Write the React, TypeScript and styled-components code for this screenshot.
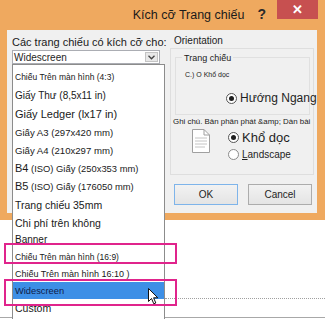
import React from 'react';
import styled, { createGlobalStyle } from 'styled-components';

const Global = createGlobalStyle`
  html, body { margin: 0; padding: 0; background: #fff; }
  body { font-family: "Liberation Sans", Arial, sans-serif; color: #1e1e1e; }
  * { box-sizing: border-box; }
`;

const Stage = styled.div`
  position: relative;
  width: 325px;
  height: 319px;
  overflow: hidden;
  background: #fff;
  display: flex;
  flex-direction: column;
`;

const Dialog = styled.div`
  width: 325px;
  height: 220px;
  flex: none;
  background: #efa95f;
  display: flex;
  flex-direction: column;
  padding: 0 8px 7px 7px;
`;

const TitleBar = styled.div`
  height: 30px;
  flex: none;
  margin: 0 -8px 0 -7px;
  display: flex;
  justify-content: flex-end;
  align-items: flex-start;
`;

const Title = styled.div`
  font-size: 12.5px;
  line-height: 30px;
  color: #1a1a1a;
`;

const Help = styled.div`
  margin-left: 13px;
  font-size: 14px;
  font-weight: bold;
  line-height: 28px;
  color: #2a2a2a;
`;

const CloseButton = styled.div`
  margin-left: 11px;
  margin-right: 7px;
  width: 41px;
  height: 19px;
  background: #c75050;
  color: #fff;
  font-size: 13px;
  font-weight: bold;
  display: flex;
  align-items: center;
  justify-content: center;
`;

const Body = styled.div`
  flex: 1;
  background: #f0f0f0;
  display: flex;
  padding: 5px 3px 0 5px;
`;

const LeftCol = styled.div`
  width: 148px;
  display: flex;
  flex-direction: column;
`;

const Label = styled.div`
  font-size: 11px;
  line-height: 14px;
  white-space: nowrap;
  color: #1a1a1a;
`;

const Select = styled.div`
  margin-top: 1px;
  height: 14px;
  width: 148px;
  background: #fff;
  border: 1px solid #abadb3;
  display: flex;
  align-items: center;
  font-size: 10px;
  padding-left: 1px;
`;

const SelectText = styled.span`
  flex: 1;
`;

const SelectArrow = styled.div`
  width: 13px;
  height: 10px;
  margin-right: 1px;
  background: #e8e8e8;
  border: 1px solid #c4c4c4;
  display: flex;
  align-items: center;
  justify-content: center;
`;

const RightCol = styled.div`
  margin-left: 10px;
  width: 144px;
  display: flex;
  flex-direction: column;
`;

const SmallLabel = styled.div`
  font-size: 10px;
  line-height: 12px;
  padding-left: 4px;
  color: #222;
`;

const Group = styled.div`
  margin-top: 1px;
  height: 127px;
  border: 1px solid #dedede;
  display: flex;
  flex-direction: column;
`;

const SubGroup = styled.div`
  margin: 8px 3px 0 4px;
  height: 58px;
  border: 1px solid #e0e0e0;
  display: flex;
  flex-direction: column;
  padding-left: 6px;
`;

const Legend = styled.div`
  align-self: flex-start;
  margin-top: -5px;
  padding: 0 2px;
  background: #f0f0f0;
  font-size: 9px;
  line-height: 10px;
  color: #222;
`;

const Tiny = styled.div<{ $size: number; $top: number; $left: number }>`
  font-size: ${(p) => p.$size}px;
  line-height: 9px;
  margin-top: ${(p) => p.$top}px;
  margin-left: ${(p) => p.$left}px;
  white-space: nowrap;
  color: #222;
`;

const RadioRow = styled.div<{ $h: number; $top: number; $left?: number }>`
  height: ${(p) => p.$h}px;
  margin-top: ${(p) => p.$top}px;
  margin-left: ${(p) => p.$left ?? 0}px;
  display: flex;
  align-items: center;
  gap: 3px;
  white-space: nowrap;
`;

const Radio = styled.span<{ $on?: boolean }>`
  width: 11px;
  height: 11px;
  flex: none;
  border-radius: 50%;
  border: 1px solid ${(p) => (p.$on ? '#555' : '#8a8a8a')};
  background: #fff;
  display: flex;
  align-items: center;
  justify-content: center;
  &::after {
    content: '';
    width: 5px;
    height: 5px;
    border-radius: 50%;
    background: ${(p) => (p.$on ? '#1e1e1e' : 'transparent')};
  }
`;

const RadioText = styled.span<{ $size: number }>`
  font-size: ${(p) => p.$size}px;
  color: #1e1e1e;
  u { text-decoration: underline; }
`;

const NotesRow = styled.div`
  margin-top: 3px;
  display: flex;
  align-items: flex-start;
`;

const DocIcon = styled.svg`
  margin-left: 21px;
  flex: none;
`;

const RadioCol = styled.div`
  margin-left: 18px;
  display: flex;
  flex-direction: column;
`;

const Buttons = styled.div`
  margin-top: 9px;
  padding-left: 4px;
  display: flex;
  gap: 10px;
`;

const Button = styled.div<{ $default?: boolean }>`
  width: 64px;
  height: 21px;
  border: 1px solid ${(p) => (p.$default ? '#7eb4ea' : '#acacac')};
  background: linear-gradient(#f2f2f2, #e4e4e4);
  display: flex;
  align-items: center;
  justify-content: center;
  font-size: 10px;
  color: #1e1e1e;
`;

const Backdrop = styled.div`
  flex: 1;
  display: flex;
  flex-direction: column;
  padding-top: 78px;
`;

const DottedLine = styled.div`
  margin-left: 165px;
  border-top: 1px dotted #a0a0a0;
`;

const BottomLine = styled.div`
  margin-top: 18px;
  border-top: 1px solid #a8a8a8;
`;

const List = styled.div`
  position: absolute;
  left: 12px;
  top: 64px;
  width: 153px;
  height: 270px;
  background: #fff;
  border: 1px solid #8c8c8c;
  padding-top: 3px;
  display: flex;
  flex-direction: column;
`;

const Item = styled.div<{ $size: number; $h: number; $selected?: boolean }>`
  height: ${(p) => p.$h}px;
  flex: none;
  display: flex;
  align-items: center;
  padding-left: 2px;
  font-size: ${(p) => p.$size}px;
  white-space: pre;
  background: ${(p) => (p.$selected ? '#3d8fe6' : 'transparent')};
  color: ${(p) => (p.$selected ? '#10204a' : '#1a1a1a')};
`;

const Big = styled.span`
  font-size: 11px;
`;

const Highlight = styled.div<{ $top: number; $h: number }>`
  position: absolute;
  left: 4px;
  top: ${(p) => p.$top}px;
  width: 173px;
  height: ${(p) => p.$h}px;
  border: 2px solid #e0248c;
`;

const Cursor = styled.svg`
  position: absolute;
  left: 148px;
  top: 288px;
`;

type Entry = { text: string; size: number; h: number; prefix?: string; selected?: boolean };

const entries: Entry[] = [
  { text: 'Chiếu Trên màn hình (4:3)', size: 8.5, h: 18 },
  { text: 'Giấy Thư (8,5x11 in)', size: 10, h: 18 },
  { text: 'Giấy Ledger (lx17 in)', size: 11, h: 19 },
  { text: 'Giấy A3 (297x420 mm)', size: 9.6, h: 18 },
  { text: 'Giấy A4 (210x297 mm)', size: 9.6, h: 18 },
  { prefix: 'B4', text: ' (ISO) Giấy (250x353 mm)', size: 9.4, h: 18 },
  { prefix: 'B5', text: ' (ISO) Giấy (176050 mm)', size: 9.4, h: 18 },
  { text: 'Trang chiếu 35mm', size: 10.5, h: 19 },
  { text: 'Chi phí trên không', size: 10.5, h: 17 },
  { text: 'Banner', size: 10, h: 17 },
  { text: 'Chiếu Trên màn hình (16:9)', size: 8.5, h: 17 },
  { text: 'Chiếu Trên màn hình 16:10 )', size: 9, h: 17 },
  { text: 'Widescreen', size: 9.3, h: 17, selected: true },
  { text: 'Custom', size: 10.5, h: 18 },
];

export default function App() {
  return (
    <Stage>
      <Global />
      <Dialog>
        <TitleBar>
          <Title>Kích cỡ Trang chiếu</Title>
          <Help>?</Help>
          <CloseButton>✕</CloseButton>
        </TitleBar>
        <Body>
          <LeftCol>
            <Label>Các trang chiếu có kích cỡ cho:</Label>
            <Select>
              <SelectText>Widescreen</SelectText>
              <SelectArrow>
                <svg width="7" height="5" viewBox="0 0 7 5">
                  <path d="M0.5 0.8 L3.5 3.8 L6.5 0.8" fill="none" stroke="#444" strokeWidth="1.3" />
                </svg>
              </SelectArrow>
            </Select>
          </LeftCol>
          <RightCol>
            <SmallLabel>Orientation</SmallLabel>
            <Group>
              <SubGroup>
                <Legend>Trang chiếu</Legend>
                <Tiny $size={7} $top={7} $left={3}>C.) O Khổ dọc</Tiny>
                <RadioRow $h={16} $top={11} $left={44}>
                  <Radio $on />
                  <RadioText $size={12}>Hướng Ngang</RadioText>
                </RadioRow>
              </SubGroup>
              <Tiny $size={7.9} $top={2} $left={2}>Ghi chú. Bản phân phát &amp;amp; Dàn bài</Tiny>
              <NotesRow>
                <DocIcon width="18" height="24" viewBox="0 0 18 24">
                  <path d="M0.5 0.5 H12 L17.5 6 V23.5 H0.5 Z" fill="#fff" stroke="#a0a0a0" />
                  <path d="M12 0.5 V6 H17.5" fill="none" stroke="#a0a0a0" />
                  <path d="M3 9 H15 M3 12 H15 M3 15 H15 M3 18 H13" stroke="#c4c4c4" />
                </DocIcon>
                <RadioCol>
                  <RadioRow $h={16} $top={0}>
                    <Radio $on />
                    <RadioText $size={13}>Khổ dọc</RadioText>
                  </RadioRow>
                  <RadioRow $h={14} $top={2}>
                    <Radio />
                    <RadioText $size={10}><u>L</u>andscape</RadioText>
                  </RadioRow>
                </RadioCol>
              </NotesRow>
            </Group>
            <Buttons>
              <Button $default>OK</Button>
              <Button>Cancel</Button>
            </Buttons>
          </RightCol>
        </Body>
      </Dialog>
      <Backdrop>
        <DottedLine />
        <BottomLine />
      </Backdrop>
      <List>
        {entries.map((e, i) => (
          <Item key={i} $size={e.size} $h={e.h} $selected={e.selected}>
            <span>
              {e.prefix && <Big>{e.prefix}</Big>}
              {e.text}
            </span>
          </Item>
        ))}
      </List>
      <Highlight $top={243} $h={21} />
      <Highlight $top={279} $h={27} />
      <Cursor width="11" height="17" viewBox="0 0 11 17">
        <path d="M0.5 0.5 L0.5 13.5 L3.5 10.5 L5.8 15.8 L7.8 15 L5.6 9.8 L9.8 9.8 Z" fill="#fff" stroke="#111" strokeWidth="1" strokeLinejoin="round" />
      </Cursor>
    </Stage>
  );
}
